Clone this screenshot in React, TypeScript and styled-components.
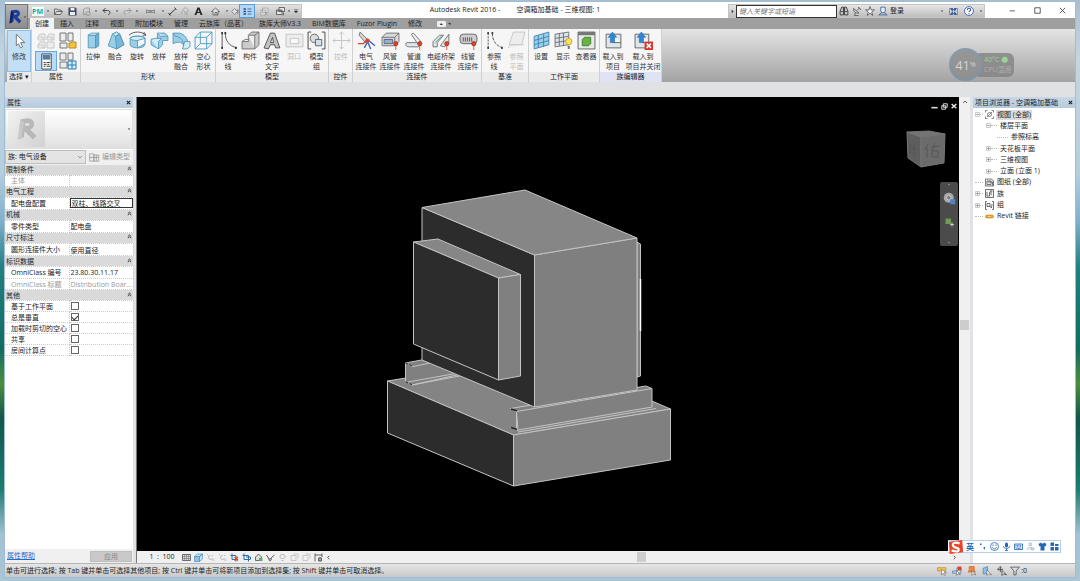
import React, { ReactNode } from "react";
import styled, { createGlobalStyle, css } from "styled-components";

const Global = createGlobalStyle`
  * { box-sizing: border-box; }
  html, body { margin: 0; padding: 0; }
  body, button, input, select, table {
    font-family: "Open Sans", "Noto Sans CJK SC", sans-serif;
    font-size: 7px;
    line-height: 10px;
    color: #222;
  }
  button { border: 0; padding: 0; background: none; white-space: nowrap; }
`;

/* ---------- window frame ---------- */

const Desktop = styled.div`
  min-height: 100vh;
  display: flex;
  padding: 2px 5px 4px;
  background: linear-gradient(180deg, #a9bfd0 0, #c3d6e2 10%, #b4cedd 30%, #7fb0cc 38%, #22807f 46%,
    #126c62 60%, #4b8f3a 66%, #11564a 72%, #1d7b70 84%, #a3c2d3 92%, #a9c5d6 100%);
`;

const Window = styled.div`
  flex: 1;
  min-width: 0;
  display: flex;
  flex-direction: column;
  background: #fff;
  outline: 1px solid #9fbdd6;
`;

const Header = styled.header`
  display: grid;
  grid-template-columns: 23px 1fr;
  grid-template-rows: 16px 11px;
`;

const AppButton = styled.button`
  grid-row: 1 / 3;
  margin-top: 2px;
  display: flex;
  align-items: center;
  justify-content: center;
  border: 1px solid #777;
  background: linear-gradient(#b4b4b4, #8b8b8b);
`;

const TitleBar = styled.div`
  display: flex;
  align-items: stretch;
  padding-top: 2px;
`;

const QuickAccess = styled.div`
  display: flex;
  align-items: center;
  width: 274px;
  padding-left: 1px;
  background: linear-gradient(#e2e2e2, #bdbdbd);
  border: 1px solid #c4c4c4;
`;

const ToolButton = styled.button<{ $w: number; $on?: boolean }>`
  width: ${(p) => p.$w}px;
  height: 12px;
  flex: none;
  display: flex;
  align-items: center;
  justify-content: center;
  ${(p) => p.$on && css`background: #b5d6f2; outline: 1px solid #5b9bd5;`}
`;

const Title = styled.h1`
  flex: 1;
  margin: 0;
  font-size: 7px;
  line-height: 12px;
  font-weight: 400;
  text-align: center;
  white-space: pre;
`;

const InfoCenter = styled.form`
  display: flex;
  align-items: center;
  width: 257px;
  background: linear-gradient(#e6e6e6, #bdbdbd);
  border: 1px solid #c4c4c4;
`;

const SearchInput = styled.input`
  width: 101px;
  height: 13px;
  padding: 0 2px;
  border: 1px solid #333;
  background: #fff;
  &::placeholder { color: #777; font-style: italic; }
`;

const LoginButton = styled.button`
  width: 57px;
  height: 12px;
  display: flex;
  align-items: center;
  justify-content: space-between;
  padding-right: 3px;
`;

const WindowControls = styled.div`
  display: flex;
  margin-left: 15px;
`;

const TabBar = styled.nav`
  display: flex;
  gap: 1px;
  padding-left: 2px;
  background: #9f9f9f;
`;

const Tab = styled.button<{ $active?: boolean }>`
  padding: 0 5px;
  height: 11px;
  background: ${(p) => (p.$active ? "#f2f2f2" : "transparent")};
`;

/* ---------- ribbon ---------- */

const Ribbon = styled.section`
  display: flex;
  height: 53px;
  flex: none;
  padding-left: 2px;
  background: linear-gradient(#e4e4e4, #a3a3a3);
`;

const Panel = styled.section`
  display: flex;
  flex-direction: column;
  background: #f6f6f6;
  border-right: 1px solid #cfcfcf;
`;

const PanelTools = styled.div<{ $end?: number }>`
  flex: 1;
  display: flex;
  padding: 2px ${(p) => p.$end ?? 0}px 0 1px;
`;

const PanelTitle = styled.h2<{ $lit?: boolean }>`
  margin: 0;
  height: 10px;
  font-size: 7px;
  line-height: 10px;
  font-weight: 400;
  text-align: center;
  white-space: nowrap;
  background: ${(p) => (p.$lit ? "#dfe3f3" : "#ebebeb")};
`;

const RibbonButton = styled.button<{ $w: number; $dim?: boolean; $on?: boolean }>`
  width: ${(p) => p.$w}px;
  height: 40px;
  display: flex;
  flex-direction: column;
  align-items: center;
  gap: 2px;
  color: #333;
  text-align: center;
  white-space: pre;
  svg { flex: none; stroke-width: 0.8; }
  ${(p) => p.$dim && css`color: #bbb; svg { opacity: 0.35; }`}
  ${(p) => p.$on && css`background: #c3dff6; outline: 1px solid #8fbde4;`}
`;

const ToolGrid = styled.div`
  display: grid;
  grid-template-columns: 22px 22px;
  grid-template-rows: 20px 20px;
  padding: 0 1px 0 2px;
`;

const GridTool = styled.button<{ $on?: boolean; $dim?: boolean }>`
  display: flex;
  align-items: center;
  justify-content: center;
  ${(p) => p.$on && css`background: #b9dbf7; outline: 1px solid #6aa7dc; outline-offset: -1px;`}
  ${(p) => p.$dim && css`svg { opacity: 0.35; }`}
`;

const OptionsBar = styled.div`
  height: 15px;
  flex: none;
  background: #e0e1e3;
`;

/* ---------- workspace ---------- */

const Workspace = styled.main`
  flex: 1;
  display: grid;
  grid-template-columns: 128px minmax(0, 1fr) 102px;
  column-gap: 3px;
  background: #dfe3e8;
`;

const Side = styled.aside`
  display: flex;
  flex-direction: column;
  background: #fff;
`;

const SideHeader = styled.div`
  display: flex;
  align-items: center;
  justify-content: space-between;
  height: 11px;
  padding: 0 1px 0 2px;
  white-space: nowrap;
  background: linear-gradient(#c9d6e3, #b7cbdd);
`;

const CloseButton = styled.button`
  width: 8px;
  height: 10px;
  display: flex;
  align-items: center;
  justify-content: center;
`;

const TypePreview = styled.div`
  display: flex;
  align-items: center;
  justify-content: space-between;
  height: 40px;
  margin: 1px 0;
  padding: 0 1px 0 2px;
  background: linear-gradient(#fff, #e0e0e0);
  border: 1px solid #ddd;
`;

const PreviewImage = styled.div`
  width: 37px;
  height: 36px;
  display: flex;
  align-items: center;
  justify-content: center;
  background: linear-gradient(135deg, #f2f2f2, #d2d2d2);
`;

const TypeRow = styled.div`
  display: flex;
  align-items: stretch;
  height: 15px;
  padding-bottom: 1px;
  background: #f0f0f0;
`;

const SelectBox = styled.label`
  width: 81px;
  display: flex;
  align-items: center;
  padding-right: 2px;
  background: #e4e4e4;
  border: 1px solid #bdbdbd;
`;

const Select = styled.select`
  appearance: none;
  flex: 1;
  min-width: 0;
  padding: 0 2px;
  border: 0;
  background: transparent;
`;

const EditTypeButton = styled.button`
  flex: 1;
  display: flex;
  align-items: center;
  justify-content: center;
  gap: 2px;
  color: #999;
`;

const PropTable = styled.table`
  width: 128px;
  height: 191px;
  border-collapse: collapse;
  table-layout: fixed;
  td, th { padding: 0; font-weight: 400; text-align: left; white-space: nowrap; overflow: hidden; line-height: 9px; }
`;

const GroupCell = styled.th`
  background: #dadada;
  span { padding-left: 1px; }
  button { width: 8px; float: right; line-height: 8px; }
`;

const NameCell = styled.td<{ $dim?: boolean }>`
  border: 1px dotted #ccc;
  border-left: 0;
  color: ${(p) => (p.$dim ? "#999" : "#222")};
  label { padding-left: 6px; }
`;

const ValueCell = styled.td<{ $dim?: boolean }>`
  border: 1px dotted #ccc;
  color: ${(p) => (p.$dim ? "#999" : "#222")};
  span { padding-left: 1px; }
`;

const ValueInput = styled.input<{ $focus?: boolean }>`
  display: block;
  width: 100%;
  height: 10px;
  padding: 0 1px;
  line-height: 8px;
  background: transparent;
  border: ${(p) => (p.$focus ? "1px solid #333" : "0")};
`;

const Check = styled.input`
  appearance: none;
  display: flex;
  align-items: center;
  justify-content: center;
  width: 8px;
  height: 8px;
  margin: 0 0 0 1px;
  border: 1px solid #666;
  background: #fff;
  &:checked::before {
    content: "";
    width: 5px;
    height: 3px;
    border: solid #333;
    border-width: 0 0 1px 1px;
    transform: rotate(-45deg);
  }
`;

const SideFooter = styled.div`
  display: flex;
  align-items: center;
  justify-content: space-between;
  height: 14px;
  margin-top: auto;
  padding: 0 1px 0 2px;
  background: #f0f0f0;
  a { color: #1a6fd0; }
`;

const ApplyButton = styled.button`
  width: 42px;
  height: 11px;
  background: #c9c9c9;
  border: 1px solid #bdbdbd;
  color: #888;
  line-height: 9px;
`;

const View = styled.section`
  display: grid;
  grid-template-columns: minmax(0, 1fr) 11px;
  grid-template-rows: minmax(454px, 1fr) 12px;
  background: #f0f0f0;
  border-left: 1px solid #777;
`;

const Canvas = styled.div`
  position: relative;
  background: #000;
`;

const ModelDrawing = styled.svg`
  position: absolute;
  inset: 0;
  width: 100%;
  height: 100%;
`;

const CanvasButtons = styled.div`
  position: absolute;
  top: 3px;
  right: 0;
  display: flex;
`;

const ViewCube = styled.svg`
  position: absolute;
  top: 33px;
  right: 13px;
`;

const NavBar = styled.div`
  position: absolute;
  top: 85px;
  right: 1px;
  width: 18px;
  height: 64px;
  display: flex;
  flex-direction: column;
  align-items: center;
  justify-content: space-between;
  padding: 1px 0;
  border-radius: 2px;
  background: #4b4b4b;
`;

const NavTools = styled.div`
  flex: 1;
  display: flex;
  flex-direction: column;
  gap: 12px;
  padding-top: 5px;
`;

const VerticalScroll = styled.div`
  display: flex;
  flex-direction: column;
  align-items: center;
  justify-content: space-between;
  padding: 2px 0 6px;
`;

const Thumb = styled.div`
  width: 9px;
  height: 10px;
  background: #cdcdcd;
`;

const ThumbTrack = styled.div`
  flex: 1;
  display: flex;
  align-items: center;
  justify-content: center;
`;

const ViewBar = styled.div`
  grid-column: 1 / 3;
  display: flex;
  align-items: center;
  padding: 0 12px 0 7px;
`;

const ScaleButton = styled.button`
  width: 36px;
  white-space: pre;
`;

const HorizontalTrack = styled.div`
  flex: 1;
  display: flex;
  justify-content: center;
`;

const Tree = styled.ul`
  display: grid;
  grid-template-rows: repeat(10, 1fr);
  height: 113px;
  margin: 1px 0 0;
  padding: 0 0 0 2px;
  list-style: none;
`;

const TreeRow = styled.li<{ $level: number }>`
  display: flex;
  align-items: center;
  gap: 2px;
  padding-left: ${(p) => p.$level * 11}px;
  white-space: nowrap;
`;

const TreeText = styled.span<{ $selected?: boolean }>`
  padding: 0 1px;
  background: ${(p) => (p.$selected ? "#dcdcdc" : "transparent")};
`;

const TreeLead = styled.span<{ $w: number }>`
  width: ${(p) => p.$w}px;
  display: flex;
  align-items: center;
  &::after {
    content: "";
    flex: 1;
    border-top: 1px dotted #bbb;
  }
`;

const StatusBar = styled.footer`
  display: flex;
  align-items: center;
  height: 14px;
  flex: none;
  padding: 0 48px 0 1px;
  background: linear-gradient(#e6e6e6, #c9c9c9);
  border-top: 1px solid #b5b5b5;
`;

const StatusText = styled.p`
  flex: 1;
  margin: 0;
  white-space: nowrap;
`;

/* ---------- floating widgets ---------- */

const Gauge = styled.div`
  position: fixed;
  top: 48px;
  right: 66px;
  display: flex;
  align-items: center;
  opacity: 0.8;
`;

const GaugeDial = styled.div`
  z-index: 1;
  width: 33px;
  height: 33px;
  display: flex;
  align-items: center;
  justify-content: center;
  border: 2px solid #7590a5;
  border-radius: 50%;
  background: #8a8a8a;
  color: #dedede;
  font-size: 13px;
  small { font-size: 7px; }
`;

const GaugeInfo = styled.div`
  width: 40px;
  height: 24px;
  margin-left: -8px;
  padding: 2px 0 0 10px;
  border-radius: 6px;
  background: #838383;
  color: #a9a9a9;
  white-space: nowrap;
  strong { display: block; font-weight: 400; color: #8fd98a; }
`;

const InputMethodBar = styled.div`
  position: fixed;
  right: 19px;
  bottom: 28px;
  display: flex;
  align-items: center;
  height: 13px;
  background: #fff;
  border: 1px solid #b9cfe6;
  border-left: 0;
`;

const InputMethodButton = styled.button<{ $logo?: boolean }>`
  width: ${(p) => (p.$logo ? 16 : 12)}px;
  height: 11px;
  display: flex;
  align-items: center;
  justify-content: center;
  color: #2266b5;
  font-size: 8px;
  font-weight: 700;
  svg { flex: none; }
`;

/* ---------- icons ---------- */

const B = "#9bcfe8";
const L = "#d3ebf7";
const D = "#4f93b6";
const G = "#777";
const R = "#d9442b";

const plug = <><path d="M14 12v6" stroke={R} /><circle cx="14" cy="12" r="2" fill={R} stroke="#a93020" /></>;

const icons: Record<string, ReactNode> = {
  cursor: <path d="M6 3v11l2-2 2 4 2-1-2-4h4z" fill="#fff" stroke="#666" />,
  types: <g stroke={G} fill="#ddd"><path d="M1 5l2-3h5v6H1zM10 5l2-3h5v6h-7zM1 13l2-3h5v6H1zM10 10h7v6h-7zM1 5h5v3M10 5h5v3M1 13h5v3" /></g>,
  typeProps: <><g stroke={G} fill="#e9edf0"><path d="M1 1h6v8H1zM9 1h5v8H9zM1 11h7v5H1z" /></g><path d="M10 11h2l1-1h4v6h-7z" fill="#f3c43c" stroke="#ba8a17" /></>,
  props: <><path d="M4 1h10v16H4z" fill="#fff" stroke="#444" /><path d="M5 2h8v5H5z" fill="#557da5" /><path d="M6 10h2M9 10h4M6 12h3M10 12h2M6 14h2M9 14h4" stroke="#333" /></>,
  category: <><g stroke={G} fill="#e9edf0"><path d="M1 1h6v7H1zM9 1h5v7H9zM1 10h7v6H1z" /></g><path d="M9 9h8v8H9zM13 9v8M9 13h8" fill={L} stroke="#2d7cb8" /></>,
  extrude: <g stroke={D}><path d="M4 4h7v12H4z" fill={B} /><path d="M4 4l3-2h7l-3 2z" fill={L} /><path d="M11 4l3-2v12l-3 2z" fill="#6fb3d3" /></g>,
  blend: <g stroke={D}><path d="M6 3l4-2 3 2 4 10-7 4-8-3z" fill={B} /><path d="M6 3l3 2 4-2-3-2z" fill={L} /><path d="M9 5l1 12 7-4-4-10z" fill="#79b9d7" /></g>,
  revolve: <g stroke={D}><path d="M2 7c0-3 14-3 14 0v6c-1 4-13 4-14 0z" fill={B} /><ellipse cx="9" cy="7" rx="7" ry="2" fill={L} /><path d="M9 9v7l7-4V7z" fill="#f4fafd" /><path d="M1 4c4-4 12-4 16 0M15 1l2 3-3 0" stroke="#444" fill="none" /></g>,
  sweep: <g stroke={D}><path d="M7 2h7l3 3v4h-5v4l-4 4-7-4V8h6z" fill={B} /><path d="M1 8l4-1h6l-3 3v7M7 2l3 3h7" fill={L} /></g>,
  sweptBlend: <g stroke={D}><path d="M1 2h6c5 1 8 6 8 9l-4 4c0-4-4-6-10-3z" fill={B} /><path d="M1 2l2 3c5 0 8 4 8 10" fill="none" /><path d="M12 10h5v5l-3 2h-4z" fill={L} /></g>,
  voidForm: <g stroke="#3b94c4" fill="none"><path d="M1 6h11v11H1zM6 1h11v11H6zM1 6l5-5M12 6l5-5M12 17l5-5M1 17l5-5" /></g>,
  modelLine: <><path d="M3 2v14M6 2c0 7 3 12 11 14" fill="none" stroke="#444" /><path d="M3 1v2M3 15v2M6 1v2M16 15v2" stroke="#333" strokeWidth="1.600" /></>,
  component: <g stroke="#666"><path d="M1 10h6V4l3-3h7v12l-4 4H1z" fill="#ccc" /><path d="M7 4h6v13M13 4l4-3M1 10l3-2h3" fill="#eee" /></g>,
  modelText: <path d="M7 2h4l5 14h-4l-1-3H7l-2 4-4-1zM9 6l-2 5h3z" fill="#c3c3c3" stroke="#444" fillRule="evenodd" />,
  opening: <g stroke="#555" fill="#ddd"><path d="M1 3h16v12H1z" /><path d="M5 7h8v5H5z" fill="#fff" /></g>,
  group: <><path d="M4 1H1v16h3M14 1h3v16h-3" fill="none" stroke="#333" /><circle cx="7" cy="7" r="4" fill="#ddd" stroke="#555" /><path d="M8 8h6v6H8z" fill="#cfe0ec" stroke="#555" /></>,
  control: <path d="M9 1v16M1 9h16M7 3l2-2 2 2M7 15l2 2 2-2M3 7L1 9l2 2M15 7l2 2-2 2" fill="none" stroke="#555" />,
  electrical: <><path d="M3 1l7 7-2 3-6-7z" fill="#d5d5d5" stroke="#666" /><path d="M1 12h5l3-3" stroke={R} fill="none" strokeWidth="1.300" /><path d="M10 10l-3 6M10 10l3 7M11 9l6 5" stroke="#3a5fc0" fill="none" strokeWidth="1.300" /><circle cx="10" cy="9" r="2" fill={R} /></>,
  duct: <><path d="M1 6l4-4h12v8l-4 4H1z" fill="#d7dadd" stroke="#666" /><path d="M1 6h12l4-4M13 6v8" fill="none" stroke="#666" /><path d="M3 8h8v4H3z" fill="#8fb4cc" stroke="#557" />{plug}</>,
  pipe: <><path d="M2 11h10c3 0 3 4 0 4H4c-4 0-4-4-2-4z" fill="#dfe6eb" stroke="#666" /><path d="M6 3l2-1 7 8-3 2z" fill="#eef1f3" stroke="#666" />{plug}</>,
  tray: <><path d="M1 15V10l6-6h4l-6 7v4zM8 14l8-11v8l-4 4z" fill="#dfe8ea" stroke="#666" /><path d="M3 11l6-6" stroke="#3e9b6c" />{plug}</>,
  conduit: <><rect x="1" y="3" width="16" height="9" rx="3" fill="#cfcfcf" stroke="#555" /><path d="M4 6v4M6 6v4M8 6v4M10 6v4M12 6v4" stroke="#444" />{plug}</>,
  refLine: <g stroke="#444" fill="none"><path d="M3 2v14" strokeDasharray="2 1" /><path d="M7 2c0 7 3 12 10 14" strokeDasharray="3 1" /><path d="M3 1v2M3 15v2M7 1v2M16 15v2" strokeWidth="1.600" /></g>,
  refPlane: <g stroke="#666" fill="#ddd"><path d="M6 1h11l-3 12H2z" /><path d="M1 16l3-3h12" /></g>,
  setPlane: <path d="M2 5l14-4v12L2 17zM6 4v12M11 3v12M2 9l14-4M2 13l14-4" fill={B} stroke="#3a7fa9" />,
  showPlane: <><path d="M1 3l13-2v12L1 15zM5 2v12M9 2v12M1 7l13-2M1 11l13-2" fill="#dbe3e8" stroke="#666" /><circle cx="14" cy="10" r="3" fill="#ffe45a" stroke="#c69c16" /><path d="M13 14h2v3h-2z" fill="#777" /></>,
  viewer: <><path d="M1 1h16v16H1z" fill="#e6ece8" stroke="#555" /><path d="M1 1h16v3H1z" fill="#777" /><path d="M5 8l2-2h6v6l-2 2H5z" fill="#68b146" stroke="#3a7b22" /></>,
  load: <><path d="M2 3h14v13H2zM9 3v8h7" fill="#e3e6e9" stroke="#555" /><path d="M6 11V6H4l4-5 4 5h-2v5z" fill="#2f86d6" stroke="#1d64a8" strokeWidth=".5" /></>,
  loadClose: <><path d="M1 3h13v13H1zM8 3v8h6" fill="#e3e6e9" stroke="#555" /><path d="M5 11V6H3l4-5 4 5H9v5z" fill="#2f86d6" stroke="#1d64a8" strokeWidth=".5" /><path d="M10 10h8v8h-8z" fill="#d8352d" /><path d="M12 12l4 4M16 12l-4 4" stroke="#fff" strokeWidth="1.5" /></>,
  caret: <path d="M4 7h10l-5 6z" fill="#333" />,
  right: <path d="M6 3l7 6-7 6z" fill="#333" />,
  open: <path d="M1 15V4h5l2 2h6v3M1 15L5 9h12l-4 6z" fill="#ddd" stroke="#444" strokeWidth="1.5" />,
  save: <><path d="M1 1h14l2 2v14H1z" fill="#3d4956" /><path d="M5 2h8v5H5zM4 10h10v6H4z" fill="#eef" /></>,
  sync: <path d="M3 15V5l4-3h8v5M3 15h5M15 10a4 4 0 1 1-3-1M15 6v4h-3" fill="none" stroke="#888" strokeWidth="1.5" />,
  undo: <path d="M7 2L2 7l5 5M2 7h9c7 0 6 8 1 8" fill="none" stroke="#444" strokeWidth="2" />,
  redo: <path d="M11 2l5 5-5 5M16 7H7c-7 0-6 8-1 8" fill="none" stroke="#888" strokeWidth="1.5" />,
  measure: <path d="M1 5v8M17 5v8M1 7h16M1 11h16M5 9h8" stroke="#777" strokeWidth="1.5" fill="none" />,
  dim: <path d="M2 16L16 3M1 12l4 5M13 1l4 4" stroke="#333" strokeWidth="2" />,
  tag: <path d="M2 15l4-8c0-7 10-7 10 0s-8 6-7 1M9 14h7" fill="none" stroke="#999" strokeWidth="1.5" />,
  textA: <path d="M7 1h4l6 15h-4l-1-4H6l-1 4H1zM9 5L7 10h4z" fill="#222" fillRule="evenodd" />,
  house: <path d="M1 9l8-7 8 7h-3v7H4V9zM8 16v-5h4v5" fill="#ddd" stroke="#555" strokeWidth="1.5" />,
  section: <path d="M3 9l6-6 6 6-6 6zM15 5v8l3-4z" fill="#ddd" stroke="#777" strokeWidth="1.5" />,
  thin: <><path d="M1 4h5M1 9h5M1 14h5" stroke="#1f4f93" strokeWidth="3" /><path d="M9 4h8M9 9h8M9 14h8" stroke="#1f4f93" strokeWidth="1.500" /></>,
  closeViews: <path d="M5 2h11v9H5zM2 6h9v10H2zM9 11l6 6M15 11l-6 6" fill="#ddd" stroke="#999" strokeWidth="1.3" />,
  switchWin: <path d="M6 1h11v8H6zM1 6h11v9H1zM1 8h11M15 11v5h-2" fill="#e6e6e6" stroke="#444" strokeWidth="1.5" />,
  custom: <path d="M4 5h10M4 9h10l-5 6z" fill="#333" stroke="#333" strokeWidth="1.5" />,
  binoculars: <path d="M2 16V9l3-7h3v14zM16 16V9l-3-7h-3v14zM3 10h4M11 10h4M8 6h2" fill="#ccc" stroke="#333" strokeWidth="1.6" />,
  dish: <path d="M3 3c0 8 5 10 11 9zM7 11l-2 6h8M10 7l5-5M12 1c3 0 5 2 5 5" fill="#ddd" stroke="#444" strokeWidth="1.5" />,
  star: <path d="M9 1l2 6h6l-5 4 2 6-5-4-5 4 2-6-5-4h6z" fill="#f3f3f3" stroke="#444" strokeWidth="1.3" />,
  user: <path d="M5 2h8v7l-2 3h-4L5 9zM2 17c0-3 3-4 5-5M16 17c0-3-3-4-5-5M2 16h14" fill="#e6f0fa" stroke="#35629a" strokeWidth="1.5" />,
  exchange: <><path d="M2 2h5l9 14h-5zM16 2h-5L2 16h5z" fill="#2f57a3" /><path d="M1 2v14M17 2v14" stroke="#2f57a3" strokeWidth="1" /></>,
  help: <><circle cx="9" cy="9" r="8" fill="#fff" stroke="#2f57a3" strokeWidth="1.5" /><path d="M6 7c0-4 6-4 6 0 0 2-3 2-3 4M9 13v2" fill="none" stroke="#2f57a3" strokeWidth="2" /></>,
  min: <path d="M2 10h13" stroke="#333" strokeWidth="2" />,
  max: <path d="M2 2h14v14H2z" fill="none" stroke="#333" strokeWidth="2" />,
  close: <path d="M2 2l14 14M16 2L2 16" stroke="#333" strokeWidth="2" />,
  closeBold: <path d="M3 3l12 12M15 3L3 15" stroke="#222" strokeWidth="4" />,
  minW: <path d="M1 12h16" stroke="#ddd" strokeWidth="4" />,
  restoreW: <path d="M6 2h10v9H6zM2 7h10v9H2z" fill="#000" stroke="#ddd" strokeWidth="2.5" />,
  closeW: <path d="M2 3l14 13M16 3L2 16" stroke="#eee" strokeWidth="4" />,
  chevUp: <path d="M3 12l6-6 6 6" fill="none" stroke="#444" strokeWidth="2.5" />,
  chevDown: <path d="M3 6l6 6 6-6" fill="none" stroke="#666" strokeWidth="2" />,
  chevLeft: <path d="M12 3L6 9l6 6" fill="none" stroke="#333" strokeWidth="3" />,
  chevRight: <path d="M6 3l6 6-6 6" fill="none" stroke="#333" strokeWidth="3" />,
  collapse: <path d="M3 9l6-5 6 5M3 15l6-5 6 5" fill="none" stroke="#333" strokeWidth="3" />,
  editType: <path d="M1 3h7v12H1zM8 5h8v10H8zM1 9h15M12 5v10" fill="#eee" stroke="#999" strokeWidth="1.3" />,
  detail: <><path d="M1 3h16v12H1z" fill="#ddd" stroke="#444" strokeWidth="1.5" /><path d="M1 7h16M1 11h16M5 3v12M9 3v12M13 3v12" stroke="#666" /></>,
  cubeB: <g stroke="#2470b0"><path d="M1 7h10v10H1z" fill="#8cc3ea" /><path d="M1 7l5-5h11l-6 5zM11 7l6-5v10l-6 5z" fill="#c6e2f6" /></g>,
  sun: <path d="M9 5a4 4 0 1 0 4 5M2 2l3 3M12 14h5M14 4l-2 2" fill="none" stroke="#aaa" strokeWidth="1.5" />,
  cropX: <><path d="M4 1v12h12M1 5h11v12" fill="none" stroke="#2d6bab" strokeWidth="2" /><path d="M9 8l7 7M16 8l-7 7" stroke={R} strokeWidth="3" /></>,
  crop: <path d="M4 1v12h13M1 5h12v12M8 8h9v4" fill="none" stroke="#2d6bab" strokeWidth="2" />,
  lock3d: <><path d="M3 8l6-6 6 6v7H3z" fill="#ddd" stroke="#444" strokeWidth="1.5" /><path d="M10 10h7v6h-7z" fill="#5fab68" /></>,
  glasses: <path d="M1 4l5 8h3l2-3 6-5M6 12c-1 5 5 5 5-1" fill="none" stroke="#555" strokeWidth="2" />,
  bulb: <path d="M7 15h4M9 3a4 4 0 0 1 2 8H7a4 4 0 0 1 2-8z" fill="#eee" stroke="#aaa" strokeWidth="1.5" />,
  frame: <path d="M2 5h10v10H2zM7 2h9v9" fill="none" stroke="#bbb" strokeWidth="1.5" />,
  constraints: <path d="M2 1v16M16 1v7M2 4h14M9 10h6v6H9zM12 8v9" fill="none" stroke="#444" strokeWidth="1.6" />,
  plus: <><path d="M2 2h14v14H2z" fill="#fff" stroke="#999" strokeWidth="2" /><path d="M5 9h8M9 5v8" stroke="#444" strokeWidth="2" /></>,
  minus: <><path d="M2 2h14v14H2z" fill="#fff" stroke="#999" strokeWidth="2" /><path d="M5 9h8" stroke="#444" strokeWidth="2" /></>,
  views: <path d="M1 5V1h4M13 1h4v4M17 13v4h-4M5 17H1v-4M4 14L14 4M5 9a4 4 0 1 1 8 0 4 4 0 1 1-8 0" fill="none" stroke="#555" strokeWidth="1.4" />,
  sheets: <path d="M1 2h12l4 4v10H1zM4 6h8v7H4zM6 8h9v7" fill="#eee" stroke="#444" strokeWidth="1.4" />,
  families: <path d="M1 1h16v16H1zM4 6v8h5V6M12 4v8M10 4h5" fill="#eef3f7" stroke="#444" strokeWidth="1.5" />,
  groups: <path d="M4 1H1v16h3M14 1h3v16h-3M4 5h6v6H4zM8 9l5 5 1-8" fill="none" stroke="#444" strokeWidth="1.5" />,
  link: <><rect x="1" y="6" width="16" height="6" rx="3" fill="#f0a520" stroke="#b97408" /><path d="M6 9h6" stroke="#fff" /></>,
  ime: <><path d="M1 3l15-2 1 14-15 2z" fill="#e8452b" /><path d="M13 5C8 3 4 5 6 8s6 1 6 4-5 2-8 1" fill="none" stroke="#fff" strokeWidth="2.5" /></>,
  comma: <path d="M4 3h3v3H4zM11 10h3v3l-2 3" fill="#2266b5" />,
  smile: <g fill="none" stroke="#2266b5" strokeWidth="1.6"><circle cx="9" cy="9" r="8" /><path d="M5 10c1 5 7 5 8 0M6 5v3M12 5v3" /></g>,
  mic: <><rect x="6" y="1" width="6" height="10" rx="3" fill="#2266b5" /><path d="M3 8c0 7 12 7 12 0M9 13v4M6 17h6" fill="none" stroke="#2266b5" strokeWidth="1.6" /></>,
  keyboard: <><path d="M1 4h16v11H1z" fill="#dbe9f8" stroke="#2266b5" strokeWidth="1.6" /><path d="M3 7h12M3 10h12M5 13h8" stroke="#2266b5" strokeDasharray="2 1" strokeWidth="1.5" /></>,
  person: <path d="M6 2h5v5H6zM2 16c0-6 10-8 11-2M10 12h6v4h-6z" fill="#e4e9ef" stroke="#9db4cb" strokeWidth="1.4" />,
  shirt: <path d="M1 4l5-3c1 3 5 3 6 0l5 3-2 5-2-1v9H5V8L3 9z" fill="#2266b5" />,
  apps: <path d="M1 1h7v7H1zM10 4h7v4h-7zM1 10h7v7H1zM10 10h7v7h-7z" fill="#2266b5" />,
  selLink: <><path d="M1 3h15v6H1z" fill="#f1c550" stroke="#a9812a" /><path d="M8 6v10l3-3 2 4 2-1-2-4h4z" fill="#fff" stroke="#555" /></>,
  selUnder: <><path d="M1 9h8V3h7v10H1z" fill="#c7ddf1" stroke="#4b7fb3" strokeWidth="1.4" /><path d="M10 1h7v7h-7z" fill={R} /><path d="M8 8v9l3-3 4 2z" fill="#fff" stroke="#555" /></>,
  selPin: <><path d="M4 1h9v6l2 4H2l2-4z" fill="#e98a34" stroke={R} /><path d="M9 8v9l3-3 4 2z" fill="#fff" stroke="#555" /></>,
  selFace: <><path d="M2 4l8-3v13H2z" fill="#8cc0ea" stroke="#2d6bab" /><path d="M9 7v10l3-3 5 2z" fill="#fff" stroke="#555" /></>,
  drag: <path d="M6 1v10M1 6h10M4 3l2-2 2 2M3 4L1 6l2 2M9 8v9l3-3 5 2z" fill="#fff" stroke="#333" strokeWidth="1.4" />,
  filter: <path d="M1 2h16l-6 7v7H7V9z" fill="#d7dde3" stroke="#555" strokeWidth="1.5" />,
  wheel: <><circle cx="8" cy="8" r="7" fill="#a9a9a9" /><circle cx="8" cy="8" r="3" fill="#777" stroke="#ddd" /><path d="M10 10h7v7h-7z" fill="#4d87bc" /></>,
  zoomW: <><path d="M1 1h11v11H1z" fill="#6f9b53" /><path d="M14 9v8M10 13h8" stroke="#ccc" strokeWidth="2" /></>,
  caretW: <path d="M5 6h8l-4 5z" fill="#ccc" />,
};

const Icon = ({ n, s = 10 }: { n: string; s?: number }) => (
  <svg width={s} height={s} viewBox="0 0 18 18" aria-hidden="true">{icons[n]}</svg>
);

const Logo = ({ size, ghost }: { size: number; ghost?: boolean }) => (
  <svg width={size} height={size} viewBox="0 0 20 20" aria-hidden="true">
    <path d="M5 2l6-1c6 0 7 7 2 9l5 5-3 3-7-7v-4h3c2 0 2-2 0-2H9L8 16l-4 2z" fill={ghost ? "#b8b8b8" : "#1d3f9b"} />
    <path d="M5 2l3 2-2 13-3 1z" fill={ghost ? "#c8c8c8" : "#0f2566"} />
  </svg>
);

const PmMark = styled.span`
  width: 12px;
  background: #f4ffff;
  color: #12a89a;
  font-weight: 700;
  line-height: 9px;
  text-align: center;
`;

/* ---------- data ---------- */

const quickTools: [string, number, string][] = [
  ["open", 16, "打开"], ["save", 13, "保存"], ["sync", 14, "同步"], ["caret", 6, "同步选项"],
  ["undo", 15, "放弃"], ["caret", 6, "放弃列表"], ["redo", 14, "重做"], ["caret", 6, "重做列表"],
  ["measure", 20, "测量"], ["caret", 5, "测量选项"], ["dim", 14, "对齐尺寸标注"], ["tag", 11, "标记"],
  ["textA", 16, "文字"], ["house", 18, "三维视图"], ["caret", 5, "三维选项"], ["section", 11, "剖面"],
  ["thin", 14, "细线"], ["closeViews", 21, "关闭隐藏窗口"], ["switchWin", 11, "切换窗口"],
  ["caret", 5, "窗口列表"], ["custom", 10, "自定义"],
];

const tabs = ["创建", "插入", "注释", "视图", "附加模块", "管理", "云族库（品茗）", "族库大师V3.3", "BIM数据库", "Fuzor Plugin", "修改"];

type Tool = { i: string; t: string; w?: number; dim?: boolean };
const panels: { title: string; lit?: boolean; end?: number; tools: Tool[] }[] = [
  { title: "形状", tools: [
    { i: "extrude", t: "拉伸" }, { i: "blend", t: "融合" }, { i: "revolve", t: "旋转" }, { i: "sweep", t: "放样" },
    { i: "sweptBlend", t: "放样\n融合" }, { i: "voidForm", t: "空心\n形状", w: 23 } ] },
  { title: "模型", tools: [
    { i: "modelLine", t: "模型\n线" }, { i: "component", t: "构件" }, { i: "modelText", t: "模型\n文字" },
    { i: "opening", t: "洞口", dim: true }, { i: "group", t: "模型\n组", w: 23 } ] },
  { title: "控件", tools: [{ i: "control", t: "控件", dim: true }] },
  { title: "连接件", end: 1, tools: [
    { i: "electrical", t: "电气\n连接件", w: 24 }, { i: "duct", t: "风管\n连接件", w: 24 }, { i: "pipe", t: "管道\n连接件", w: 24 },
    { i: "tray", t: "电缆桥架\n连接件", w: 30 }, { i: "conduit", t: "线管\n连接件", w: 24 } ] },
  { title: "基准", tools: [{ i: "refLine", t: "参照\n线" }, { i: "refPlane", t: "参照\n平面", dim: true, w: 23 }] },
  { title: "工作平面", end: 1, tools: [{ i: "setPlane", t: "设置" }, { i: "showPlane", t: "显示" }, { i: "viewer", t: "查看器", w: 24 }] },
  { title: "族编辑器", lit: true, tools: [{ i: "load", t: "载入到\n项目", w: 24 }, { i: "loadClose", t: "载入到\n项目并关闭", w: 36 }] },
];

type Prop = { name: string; value?: string; check?: boolean; dim?: boolean; focus?: boolean };
const groups: { title: string; props: Prop[] }[] = [
  { title: "限制条件", props: [{ name: "主体", value: "", dim: true }] },
  { title: "电气工程", props: [{ name: "配电盘配置", value: "双柱、线路交叉", focus: true }] },
  { title: "机械", props: [{ name: "零件类型", value: "配电盘" }] },
  { title: "尺寸标注", props: [{ name: "圆形连接件大小", value: "使用直径" }] },
  { title: "标识数据", props: [
    { name: "OmniClass 编号", value: "23.80.30.11.17" },
    { name: "OmniClass 标题", value: "Distribution Boar...", dim: true } ] },
  { title: "其他", props: [
    { name: "基于工作平面", check: false }, { name: "总是垂直", check: true },
    { name: "加载时剪切的空心", check: false }, { name: "共享", check: false }, { name: "房间计算点", check: false } ] },
];

const tree: { l: number; box?: string; icon?: string; t: string; sel?: boolean }[] = [
  { l: 0, box: "minus", icon: "views", t: "视图 (全部)", sel: true },
  { l: 1, box: "minus", t: "楼层平面" },
  { l: 2, t: "参照标高" },
  { l: 1, box: "plus", t: "天花板平面" },
  { l: 1, box: "plus", t: "三维视图" },
  { l: 1, box: "plus", t: "立面 (立面 1)" },
  { l: 0, icon: "sheets", t: "图纸 (全部)" },
  { l: 0, box: "plus", icon: "families", t: "族" },
  { l: 0, box: "plus", icon: "groups", t: "组" },
  { l: 0, icon: "link", t: "Revit 链接" },
];

const viewTools = ["detail", "cubeB", "sun", "sun", "cropX", "crop", "lock3d", "glasses", "bulb", "frame", "frame", "constraints"];
const statusTools = ["selLink", "selUnder", "selPin", "selFace", "drag", "filter"];
const imeTools = ["comma", "smile", "mic", "keyboard", "person", "shirt", "apps"];

/* ---------- drawings ---------- */

const Equipment = () => (
  <ModelDrawing viewBox="137 97 822 454" role="img" aria-label="空调箱加基础">
    <g stroke="#c4c4c4" strokeWidth="1" strokeLinejoin="round">
      <path d="M387.5 381L545 355 670.5 409 513.5 435z" fill="#848484" />
      <path d="M387.5 381L513.5 435V486L387.5 433z" fill="#2c2c2c" />
      <path d="M513.5 435L670.5 409V460L513.5 486z" fill="#808080" />
      <path d="M405.5 363L424 359.500 470 372 412 385 405.500 382z" fill="#808080" />
      <path d="M405.500 363L413 366.500 440 361M408 382L458 373M412 385L462 375.500" fill="none" />
      <path d="M405.500 363l7 3M405.500 382l7 3" stroke="#222" strokeDasharray="3 1" />
      <path d="M510.500 408.500L646 386 652 388.500V407L518 430 516.500 412z" fill="#808080" />
      <path d="M516.500 411.500L652 388.500M516.500 411V430M510.500 427.500L518 430.500M518 432L656 408.500" fill="none" />
      <path d="M511 409l6 2M511 427.500l6 2" stroke="#222" strokeWidth="1.500" />
      <path d="M637 242L640.500 244V376L637 377z" fill="#808080" />
      <path d="M422 207.500L534.500 255V407L422 360z" fill="#2c2c2c" />
      <path d="M534.500 255L637 238V390L534.500 407z" fill="#7f7f7f" />
      <path d="M422 207.500L525 190 637 238 534.500 255z" fill="#868686" />
      <path d="M640.500 279V331" stroke="#fff" strokeWidth="1.500" />
      <path d="M413.500 242L438 239 520.500 274.500 498.500 278z" fill="#868686" />
      <path d="M413.500 242L498.500 278V380L413.500 344z" fill="#2c2c2c" />
      <path d="M498.500 278L520.500 274.500V376L498.500 380z" fill="#808080" />
    </g>
  </ModelDrawing>
);

const Cube = () => (
  <ViewCube width="40" height="38" viewBox="0 0 40 38" role="img" aria-label="ViewCube">
    <g stroke="#757575" strokeWidth="1">
      <path d="M1 2L23 1 39 4 15 7z" fill="#747474" />
      <path d="M1 2L15 7V37L2 28z" fill="#5e5e5e" />
      <path d="M15 7L39 4 38 33 15 37z" fill="#6b6b6b" />
    </g>
    <path d="M4 12v12M3 16l9 4M8 12v15M22 14l-3 6M21 18v10M25 17l9-1M29 13l-3 8h6v6h-6v-6" fill="none" stroke="#565656" />
  </ViewCube>
);

/* ---------- app ---------- */

export default function App() {
  return (
    <Desktop>
      <Global />
      <Window>
        <Header>
          <AppButton aria-label="应用程序菜单"><Logo size={16} /><Icon n="caret" s={4} /></AppButton>
          <TitleBar>
            <QuickAccess>
              <ToolButton $w={15}><PmMark>PM</PmMark></ToolButton>
              <ToolButton $w={5} aria-label="品茗选项"><Icon n="caret" s={4} /></ToolButton>
              {quickTools.map(([i, w, label], k) => (
                <ToolButton key={k} $w={w} $on={i === "thin"} aria-label={label}>
                  <Icon n={i} s={i === "caret" ? 4 : i === "custom" ? 6 : 9} />
                </ToolButton>
              ))}
            </QuickAccess>
            <Title>{"Autodesk Revit 2016 -         空调箱加基础 - 三维视图: 1"}</Title>
            <InfoCenter onSubmit={(e) => e.preventDefault()}>
              <ToolButton $w={7} type="button" aria-label="展开"><Icon n="right" s={5} /></ToolButton>
              <SearchInput aria-label="搜索" placeholder="键入关键字或短语" />
              <ToolButton $w={13} aria-label="搜索"><Icon n="binoculars" s={10} /></ToolButton>
              <ToolButton $w={13} type="button" aria-label="通讯中心"><Icon n="dish" s={9} /></ToolButton>
              <ToolButton $w={13} type="button" aria-label="收藏夹"><Icon n="star" s={10} /></ToolButton>
              <ToolButton $w={14} type="button" aria-label="账户"><Icon n="user" s={10} /></ToolButton>
              <LoginButton type="button">登录<Icon n="caret" s={4} /></LoginButton>
              <ToolButton $w={12} type="button" aria-label="Exchange"><Icon n="exchange" s={9} /></ToolButton>
              <ToolButton $w={19} type="button" aria-label="帮助"><Icon n="help" s={10} /></ToolButton>
              <ToolButton $w={5} type="button" aria-label="帮助选项"><Icon n="caret" s={4} /></ToolButton>
            </InfoCenter>
            <WindowControls>
              <ToolButton $w={25} aria-label="最小化"><Icon n="min" s={7} /></ToolButton>
              <ToolButton $w={25} aria-label="最大化"><Icon n="max" s={7} /></ToolButton>
              <ToolButton $w={25} aria-label="关闭"><Icon n="close" s={7} /></ToolButton>
            </WindowControls>
          </TitleBar>
          <TabBar>
            {tabs.map((t, k) => <Tab key={t} $active={k === 0}>{t}</Tab>)}
            <ToolButton $w={32} aria-label="最小化功能区">
              <svg width="14" height="6" viewBox="0 0 14 6"><rect x="0" y="0" width="9" height="6" rx="1" fill="#eee" /><path d="M3 4l1-2 2 2zM11 2h3l-1 2z" fill="#333" /></svg>
            </ToolButton>
          </TabBar>
        </Header>

        <Ribbon>
          <Panel>
            <PanelTools $end={1}>
              <RibbonButton $w={22} $on><Icon n="cursor" s={19} /><span>修改</span></RibbonButton>
            </PanelTools>
            <PanelTitle>选择 ▾</PanelTitle>
          </Panel>
          <Panel>
            <PanelTools>
              <ToolGrid>
                <GridTool $dim aria-label="族类型"><Icon n="types" s={18} /></GridTool>
                <GridTool aria-label="类型属性"><Icon n="typeProps" s={18} /></GridTool>
                <GridTool $on aria-label="属性"><Icon n="props" s={17} /></GridTool>
                <GridTool aria-label="族类别和族参数"><Icon n="category" s={18} /></GridTool>
              </ToolGrid>
            </PanelTools>
            <PanelTitle>属性</PanelTitle>
          </Panel>
          {panels.map((p) => (
            <Panel key={p.title}>
              <PanelTools $end={p.end}>
                {p.tools.map((x) => (
                  <RibbonButton key={x.i} $w={x.w ?? 22} $dim={x.dim}>
                    <Icon n={x.i} s={19} />
                    <span>{x.t}</span>
                  </RibbonButton>
                ))}
              </PanelTools>
              <PanelTitle $lit={p.lit}>{p.title}</PanelTitle>
            </Panel>
          ))}
        </Ribbon>
        <OptionsBar />

        <Workspace>
          <Side>
            <SideHeader>属性<CloseButton aria-label="关闭属性"><Icon n="closeBold" s={5} /></CloseButton></SideHeader>
            <TypePreview>
              <PreviewImage><Logo size={25} ghost /></PreviewImage>
              <Icon n="caret" s={4} />
            </TypePreview>
            <TypeRow>
              <SelectBox>
                <Select aria-label="族类型"><option>族: 电气设备</option></Select>
                <Icon n="chevDown" s={6} />
              </SelectBox>
              <EditTypeButton disabled><Icon n="editType" s={11} />编辑类型</EditTypeButton>
            </TypeRow>
            <PropTable>
              <colgroup><col width="64" /><col width="64" /></colgroup>
              {groups.map((g) => (
                <tbody key={g.title}>
                  <tr>
                    <GroupCell colSpan={2}><span>{g.title}</span><button aria-label={`折叠${g.title}`}><Icon n="collapse" s={5} /></button></GroupCell>
                  </tr>
                  {g.props.map((p) => (
                    <tr key={p.name}>
                      <NameCell $dim={p.dim}><label htmlFor={p.name}>{p.name}</label></NameCell>
                      <ValueCell $dim={p.dim}>
                        {p.check !== undefined ? <Check type="checkbox" id={p.name} defaultChecked={p.check} />
                          : p.dim ? <span id={p.name}>{p.value}</span>
                          : <ValueInput id={p.name} defaultValue={p.value} $focus={p.focus} />}
                      </ValueCell>
                    </tr>
                  ))}
                </tbody>
              ))}
            </PropTable>
            <SideFooter><a href="#help">属性帮助</a><ApplyButton disabled>应用</ApplyButton></SideFooter>
          </Side>

          <View>
            <Canvas>
              <Equipment />
              <CanvasButtons>
                <ToolButton $w={10} aria-label="最小化视图"><Icon n="minW" s={7} /></ToolButton>
                <ToolButton $w={10} aria-label="还原视图"><Icon n="restoreW" s={7} /></ToolButton>
                <ToolButton $w={10} aria-label="关闭视图"><Icon n="closeW" s={6} /></ToolButton>
              </CanvasButtons>
              <Cube />
              <NavBar>
                <Icon n="caretW" s={4} />
                <NavTools>
                  <ToolButton $w={16} aria-label="控制盘"><Icon n="wheel" s={13} /></ToolButton>
                  <ToolButton $w={16} aria-label="缩放"><Icon n="zoomW" s={9} /></ToolButton>
                </NavTools>
                <Icon n="caretW" s={4} />
              </NavBar>
            </Canvas>
            <VerticalScroll>
              <Icon n="chevUp" s={6} />
              <ThumbTrack><Thumb /></ThumbTrack>
            </VerticalScroll>
            <ViewBar>
              <ScaleButton>{"1  :  100"}</ScaleButton>
              {viewTools.map((n, k) => <ToolButton key={k} $w={12} aria-label={`视图控制 ${k + 1}`}><Icon n={n} s={9} /></ToolButton>)}
              <ToolButton $w={8} aria-label="向左滚动"><Icon n="chevLeft" s={5} /></ToolButton>
              <HorizontalTrack><Thumb /></HorizontalTrack>
              <ToolButton $w={8} aria-label="向右滚动"><Icon n="chevRight" s={5} /></ToolButton>
            </ViewBar>
          </View>

          <Side>
            <SideHeader>项目浏览器 - 空调箱加基础<CloseButton aria-label="关闭项目浏览器"><Icon n="closeBold" s={5} /></CloseButton></SideHeader>
            <Tree>
              {tree.map((r) => (
                <TreeRow key={r.t} $level={r.l}>
                  <TreeLead $w={r.icon ? 8 : 11}>{r.box && <Icon n={r.box} s={5} />}</TreeLead>
                  {r.icon && <Icon n={r.icon} s={9} />}
                  <TreeText $selected={r.sel}>{r.t}</TreeText>
                </TreeRow>
              ))}
            </Tree>
          </Side>
        </Workspace>

        <StatusBar>
          <StatusText>单击可进行选择; 按 Tab 键并单击可选择其他项目; 按 Ctrl 键并单击可将新项目添加到选择集; 按 Shift 键并单击可取消选择。</StatusText>
          {statusTools.map((n, k) => <ToolButton key={n} $w={k < 5 ? 15 : 12} aria-label={`选择选项 ${k + 1}`}><Icon n={n} s={10} /></ToolButton>)}
          <span>:0</span>
        </StatusBar>
      </Window>

      <Gauge>
        <GaugeDial>41<small>%</small></GaugeDial>
        <GaugeInfo><strong>40°C ●</strong>CPU温度</GaugeInfo>
      </Gauge>
      <InputMethodBar>
        <InputMethodButton $logo aria-label="输入法"><Icon n="ime" s={16} /></InputMethodButton>
        <InputMethodButton>英</InputMethodButton>
        {imeTools.map((n, k) => <InputMethodButton key={n} aria-label={`输入选项 ${k + 1}`}><Icon n={n} s={9} /></InputMethodButton>)}
      </InputMethodBar>
    </Desktop>
  );
}
